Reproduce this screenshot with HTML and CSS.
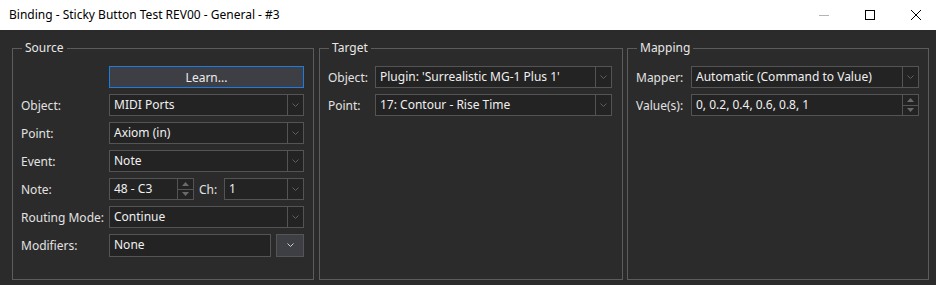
FILE: index.html
```html
<!DOCTYPE html>
<html lang="en">
<head>
    <meta charset="UTF-8">
    <title>Binding - Sticky Button Test REV00 - General - #3</title>
    <link rel="stylesheet" href="styles.css">
</head>
<body>
    <div class="window">
        <div class="titlebar">
            <div class="title">Binding - Sticky Button Test REV00 - General - #3</div>
            <div class="caption-buttons">
                <span class="caption-btn">
                    <svg width="10" height="10" viewBox="0 0 10 10"><path d="M0 5.5 H10" stroke="#b4b4b4" stroke-width="1"/></svg>
                </span>
                <span class="caption-btn">
                    <svg width="10" height="10" viewBox="0 0 10 10"><rect x="0.5" y="0.5" width="9" height="9" stroke="#000" fill="none"/></svg>
                </span>
                <span class="caption-btn">
                    <svg width="10" height="10" viewBox="0 0 10 10"><path d="M0 0 L10 10 M10 0 L0 10" stroke="#000" stroke-width="1"/></svg>
                </span>
            </div>
        </div>

        <div class="panes">
            <fieldset class="group group-source">
                <legend>Source</legend>
                <div class="form">
                    <span></span>
                    <button class="learn">Learn...</button>

                    <label>Object:</label>
                    <div class="combo"><span class="value">MIDI Ports</span><span class="arrow"><svg width="7" height="4" viewBox="0 0 7 4"><path d="M0.5 0.5 L3.5 3.5 L6.5 0.5" stroke="#5f5f5f" fill="none"/></svg></span></div>

                    <label>Point:</label>
                    <div class="combo"><span class="value">Axiom (in)</span><span class="arrow"><svg width="7" height="4" viewBox="0 0 7 4"><path d="M0.5 0.5 L3.5 3.5 L6.5 0.5" stroke="#5f5f5f" fill="none"/></svg></span></div>

                    <label>Event:</label>
                    <div class="combo"><span class="value">Note</span><span class="arrow"><svg width="7" height="4" viewBox="0 0 7 4"><path d="M0.5 0.5 L3.5 3.5 L6.5 0.5" stroke="#5f5f5f" fill="none"/></svg></span></div>

                    <label>Note:</label>
                    <div class="row-inline">
                        <div class="spin note-spin">
                            <span class="value">48 - C3</span>
                            <span class="spin-btns">
                                <span class="spin-up"><svg width="7" height="4" viewBox="0 0 7 4"><path d="M0 4 L3.5 0 L7 4Z" fill="#6a6a6a"/></svg></span>
                                <span class="spin-down"><svg width="7" height="4" viewBox="0 0 7 4"><path d="M0 0 L3.5 4 L7 0Z" fill="#6a6a6a"/></svg></span>
                            </span>
                        </div>
                        <label class="ch-label">Ch:</label>
                        <div class="combo ch-combo"><span class="value">1</span><span class="arrow"><svg width="7" height="4" viewBox="0 0 7 4"><path d="M0.5 0.5 L3.5 3.5 L6.5 0.5" stroke="#5f5f5f" fill="none"/></svg></span></div>
                    </div>

                    <label>Routing Mode:</label>
                    <div class="combo"><span class="value">Continue</span><span class="arrow"><svg width="7" height="4" viewBox="0 0 7 4"><path d="M0.5 0.5 L3.5 3.5 L6.5 0.5" stroke="#5f5f5f" fill="none"/></svg></span></div>

                    <label>Modifiers:</label>
                    <div class="row-inline">
                        <div class="textbox modifiers-box">None</div>
                        <button class="drop-btn"><svg width="7" height="4" viewBox="0 0 7 4"><path d="M0.5 0.5 L3.5 3.5 L6.5 0.5" stroke="#d0d0d0" fill="none"/></svg></button>
                    </div>
                </div>
            </fieldset>

            <fieldset class="group group-target">
                <legend>Target</legend>
                <div class="form form-target">
                    <label>Object:</label>
                    <div class="combo"><span class="value">Plugin: 'Surrealistic MG-1 Plus 1'</span><span class="arrow"><svg width="7" height="4" viewBox="0 0 7 4"><path d="M0.5 0.5 L3.5 3.5 L6.5 0.5" stroke="#5f5f5f" fill="none"/></svg></span></div>

                    <label>Point:</label>
                    <div class="combo"><span class="value">17: Contour - Rise Time</span><span class="arrow"><svg width="7" height="4" viewBox="0 0 7 4"><path d="M0.5 0.5 L3.5 3.5 L6.5 0.5" stroke="#5f5f5f" fill="none"/></svg></span></div>
                </div>
            </fieldset>

            <fieldset class="group group-mapping">
                <legend>Mapping</legend>
                <div class="form form-mapping">
                    <label>Mapper:</label>
                    <div class="combo"><span class="value">Automatic (Command to Value)</span><span class="arrow"><svg width="7" height="4" viewBox="0 0 7 4"><path d="M0.5 0.5 L3.5 3.5 L6.5 0.5" stroke="#5f5f5f" fill="none"/></svg></span></div>

                    <label>Value(s):</label>
                    <div class="spin">
                        <span class="value">0, 0.2, 0.4, 0.6, 0.8, 1</span>
                        <span class="spin-btns">
                            <span class="spin-up"><svg width="7" height="4" viewBox="0 0 7 4"><path d="M0 4 L3.5 0 L7 4Z" fill="#6a6a6a"/></svg></span>
                            <span class="spin-down"><svg width="7" height="4" viewBox="0 0 7 4"><path d="M0 0 L3.5 4 L7 0Z" fill="#6a6a6a"/></svg></span>
                        </span>
                    </div>
                </div>
            </fieldset>
        </div>
    </div>
</body>
</html>
```

FILE: styles.css
```css
* {
    box-sizing: border-box;
}
body {
    margin: 0;
    width: 936px;
    height: 285px;
    overflow: hidden;
    background-color: #2b2b2b;
    font-family: "Noto Sans", "Open Sans", sans-serif;
    font-size: 12px;
    color: #e4e4e4;
}
.titlebar {
    height: 30px;
    background-color: #fff;
    display: flex;
    align-items: center;
    justify-content: space-between;
}
.title {
    padding-left: 9px;
    color: #000;
    font-size: 12px;
    line-height: 30px;
}
.caption-buttons {
    display: flex;
    margin-right: -3px;
}
.caption-btn {
    width: 46px;
    height: 30px;
    display: flex;
    align-items: center;
    justify-content: center;
}
.panes {
    display: flex;
    padding: 10px 0 0 12px;
}
.group {
    margin: 0;
    padding: 0 9px 0 8px;
    height: 240px;
    border: 1px solid #5c5c5c;
    min-inline-size: 0;
}
.group legend {
    margin-left: 1px;
    padding: 0 3px;
    line-height: 16px;
    color: #e8e8e8;
}
.group-source {
    width: 302px;
}
.group-target {
    width: 304px;
    margin-left: 5px;
    padding-right: 10px;
}
.group-mapping {
    width: 302px;
    margin-left: 4px;
}
.form {
    display: grid;
    grid-template-columns: 88px 1fr;
    grid-auto-rows: 22px;
    row-gap: 6px;
    align-items: center;
    padding-top: 10px;
}
.form-target {
    grid-template-columns: 47px 1fr;
}
.form-mapping {
    grid-template-columns: 55px 1fr;
}
.form label {
    white-space: nowrap;
    color: #e2e2e2;
}
.learn {
    height: 22px;
    margin-bottom: 1px;
    align-self: start;
    border: 1px solid #1e7be0;
    background-color: #3e3f44;
    color: #ececec;
    font-family: inherit;
    font-size: 12px;
    padding: 0;
}
.combo, .spin, .textbox {
    height: 22px;
    display: flex;
    border: 1px solid #545454;
    background-color: #232323;
    color: #f0f0f0;
}
.combo .value, .spin .value {
    flex: 1;
    padding-left: 4px;
    line-height: 20px;
    white-space: nowrap;
    overflow: hidden;
}
.combo .arrow {
    width: 16px;
    border-left: 1px solid #545454;
    display: flex;
    align-items: center;
    justify-content: center;
}
.spin-btns {
    width: 16px;
    border-left: 1px solid #545454;
    display: flex;
    flex-direction: column;
}
.spin-up, .spin-down {
    flex: 1;
    display: flex;
    align-items: center;
    justify-content: center;
}
.spin-up {
    border-bottom: 1px solid #545454;
}
.row-inline {
    display: flex;
    align-items: center;
    height: 22px;
}
.note-spin {
    width: 85px;
}
.ch-label {
    margin-left: 5px;
    width: 25px;
}
.ch-combo {
    flex: 1;
}
.textbox {
    padding-left: 4px;
    line-height: 20px;
}
.modifiers-box {
    width: 162px;
    height: 23px;
}
.drop-btn {
    margin-left: 5px;
    width: 28px;
    height: 23px;
    padding: 0;
    border: 1px solid #555;
    background-color: #3e3f44;
    display: flex;
    align-items: center;
    justify-content: center;
}
```
